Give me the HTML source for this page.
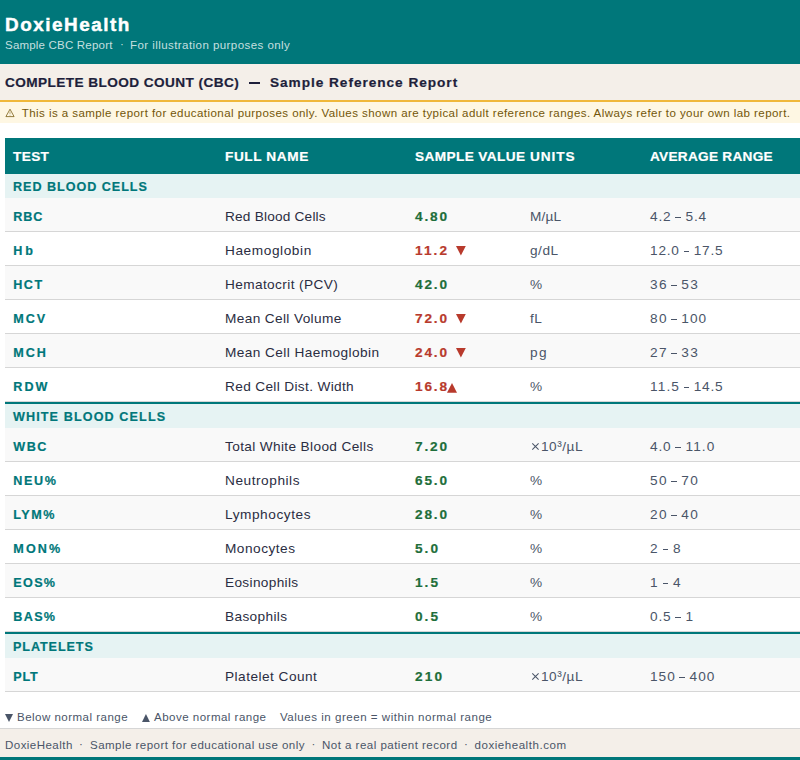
<!DOCTYPE html><html><head><meta charset="utf-8"><title>DoxieHealth CBC Report</title><style>

*{margin:0;padding:0;box-sizing:border-box}
html,body{width:800px;height:760px;overflow:hidden;background:#fff;font-family:"Liberation Sans", sans-serif}
.t{position:absolute;white-space:pre;line-height:20px;height:20px}
.blk{position:absolute}

</style></head><body>
<div class="blk" style="left:0;top:0;width:800px;height:64px;background:#00777a"></div>
<div class="blk" style="left:0;top:64px;width:800px;height:36px;background:#f4efe9"></div>
<div class="blk" style="left:0;top:100px;width:800px;height:2px;background:#f0b83a"></div>
<div class="blk" style="left:0;top:102px;width:800px;height:20.75px;background:#fef7e3"></div>
<div class="blk" style="left:5px;top:138px;width:795px;height:36px;background:#00777a"></div>
<div class="blk" style="left:5px;top:174px;width:795px;height:24px;background:#e6f3f3;"></div>
<div class="blk" style="left:5px;top:198px;width:795px;height:34px;background:#f9f9f9;border-bottom:1px solid #d6d6d6;"></div>
<div class="blk" style="left:5px;top:232px;width:795px;height:34px;background:#ffffff;border-bottom:1px solid #d6d6d6;"></div>
<div class="blk" style="left:5px;top:266px;width:795px;height:34px;background:#f9f9f9;border-bottom:1px solid #d6d6d6;"></div>
<div class="blk" style="left:5px;top:300px;width:795px;height:34px;background:#ffffff;border-bottom:1px solid #d6d6d6;"></div>
<div class="blk" style="left:5px;top:334px;width:795px;height:34px;background:#f9f9f9;border-bottom:1px solid #d6d6d6;"></div>
<div class="blk" style="left:5px;top:368px;width:795px;height:34px;background:#ffffff;border-bottom:1px solid #d6d6d6;"></div>
<div class="blk" style="left:5px;top:402px;width:795px;height:26px;background:#e6f3f3;border-top:2px solid #00777a;"></div>
<div class="blk" style="left:5px;top:428px;width:795px;height:34px;background:#f9f9f9;border-bottom:1px solid #d6d6d6;"></div>
<div class="blk" style="left:5px;top:462px;width:795px;height:34px;background:#ffffff;border-bottom:1px solid #d6d6d6;"></div>
<div class="blk" style="left:5px;top:496px;width:795px;height:34px;background:#f9f9f9;border-bottom:1px solid #d6d6d6;"></div>
<div class="blk" style="left:5px;top:530px;width:795px;height:34px;background:#ffffff;border-bottom:1px solid #d6d6d6;"></div>
<div class="blk" style="left:5px;top:564px;width:795px;height:34px;background:#f9f9f9;border-bottom:1px solid #d6d6d6;"></div>
<div class="blk" style="left:5px;top:598px;width:795px;height:34px;background:#ffffff;border-bottom:1px solid #d6d6d6;"></div>
<div class="blk" style="left:5px;top:632px;width:795px;height:26px;background:#e6f3f3;border-top:2px solid #00777a;"></div>
<div class="blk" style="left:5px;top:658px;width:795px;height:34px;background:#f9f9f9;border-bottom:1px solid #d6d6d6;"></div>
<div class="blk" style="left:0;top:728px;width:800px;height:32px;background:#f4efe9;border-top:1px solid #d6d6d6;border-bottom:3px solid #00777a"></div>
<svg class="blk" style="left:5px;top:108px" width="10" height="10" viewBox="0 0 10 10"><path d="M5 1.2 L9.1 8.6 H0.9 Z" fill="none" stroke="#735609" stroke-width="1" stroke-linejoin="round" opacity="0.75"/><path d="M5 3.6 V6.2 M5 7.1 V7.7" stroke="#735609" stroke-width="0.9" opacity="0.5"/></svg>
<svg class="blk" style="left:456.1px;top:246.4px" width="9.8" height="9.6" viewBox="0 0 9.8 9.6"><path d="M0 0 H9.8 L4.9 9.6 Z" fill="#b83a2c"/></svg>
<svg class="blk" style="left:456.1px;top:314.4px" width="9.8" height="9.6" viewBox="0 0 9.8 9.6"><path d="M0 0 H9.8 L4.9 9.6 Z" fill="#b83a2c"/></svg>
<svg class="blk" style="left:456.1px;top:348.4px" width="9.8" height="9.6" viewBox="0 0 9.8 9.6"><path d="M0 0 H9.8 L4.9 9.6 Z" fill="#b83a2c"/></svg>
<svg class="blk" style="left:447px;top:383.1px" width="10" height="9.7" viewBox="0 0 10 9.7"><path d="M5.0 0 L10 9.7 H0 Z" fill="#b83a2c"/></svg>
<svg class="blk" style="left:5.2px;top:713.9px" width="8" height="7.9" viewBox="0 0 8 7.9"><path d="M0 0 H8 L4.0 7.9 Z" fill="#4a5568"/></svg>
<svg class="blk" style="left:142.1px;top:714px" width="7.9" height="7.9" viewBox="0 0 7.9 7.9"><path d="M3.95 0 L7.9 7.9 H0 Z" fill="#4a5568"/></svg>
<div class="t" style="left:5px;top:15.00px;font-size:18.90px;font-weight:700;color:#ffffff;-webkit-text-stroke:0.45px #ffffff;letter-spacing:1.508px;">DoxieHealth</div>
<div class="t" style="left:5px;top:35.00px;font-size:11.55px;font-weight:400;color:rgba(255,255,255,0.78);letter-spacing:0.174px;">Sample CBC Report</div>
<div class="t" style="left:120px;top:34.00px;font-size:11.55px;font-weight:400;color:rgba(255,255,255,0.78);letter-spacing:0.000px;">·</div>
<div class="t" style="left:130px;top:35.00px;font-size:11.55px;font-weight:400;color:rgba(255,255,255,0.78);letter-spacing:0.422px;">For illustration purposes only</div>
<div class="t" style="left:5px;top:73.00px;font-size:13.65px;font-weight:700;color:#1e1f3b;-webkit-text-stroke:0.2px #1e1f3b;letter-spacing:0.410px;">COMPLETE BLOOD COUNT (CBC)</div>
<div class="blk" style="left:248.75px;top:82px;width:11.5px;height:2px;background:#1e1f3b"></div>
<div class="t" style="left:270px;top:73.00px;font-size:13.65px;font-weight:700;color:#1e1f3b;-webkit-text-stroke:0.2px #1e1f3b;letter-spacing:0.962px;">Sample Reference Report</div>
<div class="t" style="left:21.75px;top:103.00px;font-size:11.55px;font-weight:400;color:#735609;letter-spacing:0.423px;">This is a sample report for educational purposes only. Values shown are typical adult reference ranges. Always refer to your own lab report.</div>
<div class="t" style="left:13px;top:147.00px;font-size:13.65px;font-weight:700;color:#ffffff;-webkit-text-stroke:0.2px #ffffff;letter-spacing:0.363px;">TEST</div>
<div class="t" style="left:225px;top:147.00px;font-size:13.65px;font-weight:700;color:#ffffff;-webkit-text-stroke:0.2px #ffffff;letter-spacing:0.585px;">FULL NAME</div>
<div class="t" style="left:415px;top:147.00px;font-size:13.65px;font-weight:700;color:#ffffff;-webkit-text-stroke:0.2px #ffffff;letter-spacing:0.377px;">SAMPLE VALUE</div>
<div class="t" style="left:530px;top:147.00px;font-size:13.65px;font-weight:700;color:#ffffff;-webkit-text-stroke:0.2px #ffffff;letter-spacing:0.891px;">UNITS</div>
<div class="t" style="left:650px;top:147.00px;font-size:13.65px;font-weight:700;color:#ffffff;-webkit-text-stroke:0.2px #ffffff;letter-spacing:0.266px;">AVERAGE RANGE</div>
<div class="t" style="left:13px;top:177.00px;font-size:12.60px;font-weight:700;color:#00777a;-webkit-text-stroke:0.2px #00777a;letter-spacing:0.965px;">RED BLOOD CELLS</div>
<div class="t" style="left:13.3px;top:207.00px;font-size:12.60px;font-weight:700;color:#00777a;-webkit-text-stroke:0.2px #00777a;letter-spacing:0.853px;">RBC</div>
<div class="t" style="left:225px;top:207.00px;font-size:13.65px;font-weight:400;color:#2b2d42;letter-spacing:0.204px;">Red Blood Cells</div>
<div class="t" style="left:415px;top:207.00px;font-size:13.65px;font-weight:700;color:#1e6e3a;-webkit-text-stroke:0.2px #1e6e3a;letter-spacing:1.833px;">4.80</div>
<div class="t" style="left:530px;top:207.00px;font-size:13.65px;font-weight:400;color:#4a5568;letter-spacing:0.165px;">M/µL</div>
<div class="t" style="left:650px;top:207.00px;font-size:13.65px;font-weight:400;color:#4a5568;letter-spacing:0.853px;">4.2</div>
<div class="blk" style="left:675.30px;top:216.95px;width:5.6px;height:1.1px;background:#4a5568"></div>
<div class="t" style="left:685.4375px;top:207.00px;font-size:13.65px;font-weight:400;color:#4a5568;letter-spacing:0.853px;">5.4</div>
<div class="t" style="left:13.3px;top:241.00px;font-size:12.60px;font-weight:700;color:#00777a;-webkit-text-stroke:0.2px #00777a;letter-spacing:2.738px;">Hb</div>
<div class="t" style="left:225px;top:241.00px;font-size:13.65px;font-weight:400;color:#2b2d42;letter-spacing:0.584px;">Haemoglobin</div>
<div class="t" style="left:415px;top:241.00px;font-size:13.65px;font-weight:700;color:#b83a2c;-webkit-text-stroke:0.2px #b83a2c;letter-spacing:2.085px;">11.2</div>
<div class="t" style="left:530px;top:241.00px;font-size:13.65px;font-weight:400;color:#4a5568;letter-spacing:0.521px;">g/dL</div>
<div class="t" style="left:650px;top:241.00px;font-size:13.65px;font-weight:400;color:#4a5568;letter-spacing:0.792px;">12.0</div>
<div class="blk" style="left:683.56px;top:250.95px;width:5.6px;height:1.1px;background:#4a5568"></div>
<div class="t" style="left:693.703125px;top:241.00px;font-size:13.65px;font-weight:400;color:#4a5568;letter-spacing:0.792px;">17.5</div>
<div class="t" style="left:13.3px;top:275.00px;font-size:12.60px;font-weight:700;color:#00777a;-webkit-text-stroke:0.2px #00777a;letter-spacing:1.472px;">HCT</div>
<div class="t" style="left:225px;top:275.00px;font-size:13.65px;font-weight:400;color:#2b2d42;letter-spacing:0.387px;">Hematocrit (PCV)</div>
<div class="t" style="left:415px;top:275.00px;font-size:13.65px;font-weight:700;color:#1e6e3a;-webkit-text-stroke:0.2px #1e6e3a;letter-spacing:1.833px;">42.0</div>
<div class="t" style="left:530px;top:275.00px;font-size:13.65px;font-weight:400;color:#4a5568;letter-spacing:0.000px;">%</div>
<div class="t" style="left:650px;top:275.00px;font-size:13.65px;font-weight:400;color:#4a5568;letter-spacing:1.355px;">36</div>
<div class="blk" style="left:671.17px;top:284.95px;width:5.6px;height:1.1px;background:#4a5568"></div>
<div class="t" style="left:681.296875px;top:275.00px;font-size:13.65px;font-weight:400;color:#4a5568;letter-spacing:1.355px;">53</div>
<div class="t" style="left:13.3px;top:309.00px;font-size:12.60px;font-weight:700;color:#00777a;-webkit-text-stroke:0.2px #00777a;letter-spacing:1.922px;">MCV</div>
<div class="t" style="left:225px;top:309.00px;font-size:13.65px;font-weight:400;color:#2b2d42;letter-spacing:0.371px;">Mean Cell Volume</div>
<div class="t" style="left:415px;top:309.00px;font-size:13.65px;font-weight:700;color:#b83a2c;-webkit-text-stroke:0.2px #b83a2c;letter-spacing:1.833px;">72.0</div>
<div class="t" style="left:530px;top:309.00px;font-size:13.65px;font-weight:400;color:#4a5568;letter-spacing:0.442px;">fL</div>
<div class="t" style="left:650px;top:309.00px;font-size:13.65px;font-weight:400;color:#4a5568;letter-spacing:1.355px;">80</div>
<div class="blk" style="left:671.17px;top:318.95px;width:5.6px;height:1.1px;background:#4a5568"></div>
<div class="t" style="left:681.296875px;top:309.00px;font-size:13.65px;font-weight:400;color:#4a5568;letter-spacing:1.020px;">100</div>
<div class="t" style="left:13.3px;top:343.00px;font-size:12.60px;font-weight:700;color:#00777a;-webkit-text-stroke:0.2px #00777a;letter-spacing:1.953px;">MCH</div>
<div class="t" style="left:225px;top:343.00px;font-size:13.65px;font-weight:400;color:#2b2d42;letter-spacing:0.429px;">Mean Cell Haemoglobin</div>
<div class="t" style="left:415px;top:343.00px;font-size:13.65px;font-weight:700;color:#b83a2c;-webkit-text-stroke:0.2px #b83a2c;letter-spacing:1.833px;">24.0</div>
<div class="t" style="left:530px;top:343.00px;font-size:13.65px;font-weight:400;color:#4a5568;letter-spacing:1.323px;">pg</div>
<div class="t" style="left:650px;top:343.00px;font-size:13.65px;font-weight:400;color:#4a5568;letter-spacing:1.355px;">27</div>
<div class="blk" style="left:671.17px;top:352.95px;width:5.6px;height:1.1px;background:#4a5568"></div>
<div class="t" style="left:681.296875px;top:343.00px;font-size:13.65px;font-weight:400;color:#4a5568;letter-spacing:1.355px;">33</div>
<div class="t" style="left:13.3px;top:377.00px;font-size:12.60px;font-weight:700;color:#00777a;-webkit-text-stroke:0.2px #00777a;letter-spacing:2.068px;">RDW</div>
<div class="t" style="left:225px;top:377.00px;font-size:13.65px;font-weight:400;color:#2b2d42;letter-spacing:0.351px;">Red Cell Dist. Width</div>
<div class="t" style="left:415px;top:377.00px;font-size:13.65px;font-weight:700;color:#b83a2c;-webkit-text-stroke:0.2px #b83a2c;letter-spacing:1.833px;">16.8</div>
<div class="t" style="left:530px;top:377.00px;font-size:13.65px;font-weight:400;color:#4a5568;letter-spacing:0.000px;">%</div>
<div class="t" style="left:650px;top:377.00px;font-size:13.65px;font-weight:400;color:#4a5568;letter-spacing:1.131px;">11.5</div>
<div class="blk" style="left:683.56px;top:386.95px;width:5.6px;height:1.1px;background:#4a5568"></div>
<div class="t" style="left:693.703125px;top:377.00px;font-size:13.65px;font-weight:400;color:#4a5568;letter-spacing:0.792px;">14.5</div>
<div class="t" style="left:13px;top:407.00px;font-size:12.60px;font-weight:700;color:#00777a;-webkit-text-stroke:0.2px #00777a;letter-spacing:1.110px;">WHITE BLOOD CELLS</div>
<div class="t" style="left:13.3px;top:437.00px;font-size:12.60px;font-weight:700;color:#00777a;-webkit-text-stroke:0.2px #00777a;letter-spacing:1.443px;">WBC</div>
<div class="t" style="left:225px;top:437.00px;font-size:13.65px;font-weight:400;color:#2b2d42;letter-spacing:0.362px;">Total White Blood Cells</div>
<div class="t" style="left:415px;top:437.00px;font-size:13.65px;font-weight:700;color:#1e6e3a;-webkit-text-stroke:0.2px #1e6e3a;letter-spacing:1.833px;">7.20</div>
<svg class="blk" style="left:530px;top:442px" width="11" height="9" viewBox="0 0 11 9"><path d="M2.3 1.4 L8.6 7.6 M8.6 1.4 L2.3 7.6" stroke="#4a5568" stroke-width="1.05" stroke-linecap="butt"/></svg>
<div class="t" style="left:540.890625px;top:437.00px;font-size:13.65px;font-weight:400;color:#4a5568;letter-spacing:0.535px;">10³/µL</div>
<div class="t" style="left:650px;top:437.00px;font-size:13.65px;font-weight:400;color:#4a5568;letter-spacing:0.853px;">4.0</div>
<div class="blk" style="left:675.30px;top:446.95px;width:5.6px;height:1.1px;background:#4a5568"></div>
<div class="t" style="left:685.4375px;top:437.00px;font-size:13.65px;font-weight:400;color:#4a5568;letter-spacing:1.131px;">11.0</div>
<div class="t" style="left:13.3px;top:471.00px;font-size:12.60px;font-weight:700;color:#00777a;-webkit-text-stroke:0.2px #00777a;letter-spacing:1.631px;">NEU%</div>
<div class="t" style="left:225px;top:471.00px;font-size:13.65px;font-weight:400;color:#2b2d42;letter-spacing:0.551px;">Neutrophils</div>
<div class="t" style="left:415px;top:471.00px;font-size:13.65px;font-weight:700;color:#1e6e3a;-webkit-text-stroke:0.2px #1e6e3a;letter-spacing:1.833px;">65.0</div>
<div class="t" style="left:530px;top:471.00px;font-size:13.65px;font-weight:400;color:#4a5568;letter-spacing:0.000px;">%</div>
<div class="t" style="left:650px;top:471.00px;font-size:13.65px;font-weight:400;color:#4a5568;letter-spacing:1.355px;">50</div>
<div class="blk" style="left:671.17px;top:480.95px;width:5.6px;height:1.1px;background:#4a5568"></div>
<div class="t" style="left:681.296875px;top:471.00px;font-size:13.65px;font-weight:400;color:#4a5568;letter-spacing:1.355px;">70</div>
<div class="t" style="left:13.3px;top:505.00px;font-size:12.60px;font-weight:700;color:#00777a;-webkit-text-stroke:0.2px #00777a;letter-spacing:1.498px;">LYM%</div>
<div class="t" style="left:225px;top:505.00px;font-size:13.65px;font-weight:400;color:#2b2d42;letter-spacing:0.565px;">Lymphocytes</div>
<div class="t" style="left:415px;top:505.00px;font-size:13.65px;font-weight:700;color:#1e6e3a;-webkit-text-stroke:0.2px #1e6e3a;letter-spacing:1.833px;">28.0</div>
<div class="t" style="left:530px;top:505.00px;font-size:13.65px;font-weight:400;color:#4a5568;letter-spacing:0.000px;">%</div>
<div class="t" style="left:650px;top:505.00px;font-size:13.65px;font-weight:400;color:#4a5568;letter-spacing:1.355px;">20</div>
<div class="blk" style="left:671.17px;top:514.95px;width:5.6px;height:1.1px;background:#4a5568"></div>
<div class="t" style="left:681.296875px;top:505.00px;font-size:13.65px;font-weight:400;color:#4a5568;letter-spacing:1.355px;">40</div>
<div class="t" style="left:13.3px;top:539.00px;font-size:12.60px;font-weight:700;color:#00777a;-webkit-text-stroke:0.2px #00777a;letter-spacing:2.102px;">MON%</div>
<div class="t" style="left:225px;top:539.00px;font-size:13.65px;font-weight:400;color:#2b2d42;letter-spacing:0.507px;">Monocytes</div>
<div class="t" style="left:415px;top:539.00px;font-size:13.65px;font-weight:700;color:#1e6e3a;-webkit-text-stroke:0.2px #1e6e3a;letter-spacing:2.025px;">5.0</div>
<div class="t" style="left:530px;top:539.00px;font-size:13.65px;font-weight:400;color:#4a5568;letter-spacing:0.000px;">%</div>
<div class="t" style="left:650px;top:539.00px;font-size:13.65px;font-weight:400;color:#4a5568;letter-spacing:0.000px;">2</div>
<div class="blk" style="left:662.89px;top:548.95px;width:5.6px;height:1.1px;background:#4a5568"></div>
<div class="t" style="left:673.03125px;top:539.00px;font-size:13.65px;font-weight:400;color:#4a5568;letter-spacing:0.000px;">8</div>
<div class="t" style="left:13.3px;top:573.00px;font-size:12.60px;font-weight:700;color:#00777a;-webkit-text-stroke:0.2px #00777a;letter-spacing:1.318px;">EOS%</div>
<div class="t" style="left:225px;top:573.00px;font-size:13.65px;font-weight:400;color:#2b2d42;letter-spacing:0.341px;">Eosinophils</div>
<div class="t" style="left:415px;top:573.00px;font-size:13.65px;font-weight:700;color:#1e6e3a;-webkit-text-stroke:0.2px #1e6e3a;letter-spacing:2.025px;">1.5</div>
<div class="t" style="left:530px;top:573.00px;font-size:13.65px;font-weight:400;color:#4a5568;letter-spacing:0.000px;">%</div>
<div class="t" style="left:650px;top:573.00px;font-size:13.65px;font-weight:400;color:#4a5568;letter-spacing:0.000px;">1</div>
<div class="blk" style="left:662.89px;top:582.95px;width:5.6px;height:1.1px;background:#4a5568"></div>
<div class="t" style="left:673.03125px;top:573.00px;font-size:13.65px;font-weight:400;color:#4a5568;letter-spacing:0.000px;">4</div>
<div class="t" style="left:13.3px;top:607.00px;font-size:12.60px;font-weight:700;color:#00777a;-webkit-text-stroke:0.2px #00777a;letter-spacing:1.329px;">BAS%</div>
<div class="t" style="left:225px;top:607.00px;font-size:13.65px;font-weight:400;color:#2b2d42;letter-spacing:0.364px;">Basophils</div>
<div class="t" style="left:415px;top:607.00px;font-size:13.65px;font-weight:700;color:#1e6e3a;-webkit-text-stroke:0.2px #1e6e3a;letter-spacing:2.025px;">0.5</div>
<div class="t" style="left:530px;top:607.00px;font-size:13.65px;font-weight:400;color:#4a5568;letter-spacing:0.000px;">%</div>
<div class="t" style="left:650px;top:607.00px;font-size:13.65px;font-weight:400;color:#4a5568;letter-spacing:0.853px;">0.5</div>
<div class="blk" style="left:675.30px;top:616.95px;width:5.6px;height:1.1px;background:#4a5568"></div>
<div class="t" style="left:685.4375px;top:607.00px;font-size:13.65px;font-weight:400;color:#4a5568;letter-spacing:0.000px;">1</div>
<div class="t" style="left:13px;top:637.00px;font-size:12.60px;font-weight:700;color:#00777a;-webkit-text-stroke:0.2px #00777a;letter-spacing:0.910px;">PLATELETS</div>
<div class="t" style="left:13.3px;top:667.00px;font-size:12.60px;font-weight:700;color:#00777a;-webkit-text-stroke:0.2px #00777a;letter-spacing:0.787px;">PLT</div>
<div class="t" style="left:225px;top:667.00px;font-size:13.65px;font-weight:400;color:#2b2d42;letter-spacing:0.478px;">Platelet Count</div>
<div class="t" style="left:415px;top:667.00px;font-size:13.65px;font-weight:700;color:#1e6e3a;-webkit-text-stroke:0.2px #1e6e3a;letter-spacing:2.176px;">210</div>
<svg class="blk" style="left:530px;top:672px" width="11" height="9" viewBox="0 0 11 9"><path d="M2.3 1.4 L8.6 7.6 M8.6 1.4 L2.3 7.6" stroke="#4a5568" stroke-width="1.05" stroke-linecap="butt"/></svg>
<div class="t" style="left:540.890625px;top:667.00px;font-size:13.65px;font-weight:400;color:#4a5568;letter-spacing:0.535px;">10³/µL</div>
<div class="t" style="left:650px;top:667.00px;font-size:13.65px;font-weight:400;color:#4a5568;letter-spacing:1.020px;">150</div>
<div class="blk" style="left:679.44px;top:676.95px;width:5.6px;height:1.1px;background:#4a5568"></div>
<div class="t" style="left:689.5625px;top:667.00px;font-size:13.65px;font-weight:400;color:#4a5568;letter-spacing:1.020px;">400</div>
<div class="t" style="left:17px;top:707.00px;font-size:11.55px;font-weight:400;color:#4a5568;letter-spacing:0.464px;">Below normal range</div>
<div class="t" style="left:154px;top:707.00px;font-size:11.55px;font-weight:400;color:#4a5568;letter-spacing:0.472px;">Above normal range</div>
<div class="t" style="left:280px;top:707.00px;font-size:11.55px;font-weight:400;color:#4a5568;letter-spacing:0.513px;">Values in green = within normal range</div>
<div class="t" style="left:5px;top:735.00px;font-size:11.55px;font-weight:400;color:#4a5568;letter-spacing:0.441px;">DoxieHealth</div>
<div class="t" style="left:79px;top:734.00px;font-size:11.55px;font-weight:400;color:#4a5568;letter-spacing:0.000px;">·</div>
<div class="t" style="left:90px;top:735.00px;font-size:11.55px;font-weight:400;color:#4a5568;letter-spacing:0.455px;">Sample report for educational use only</div>
<div class="t" style="left:311.5px;top:734.00px;font-size:11.55px;font-weight:400;color:#4a5568;letter-spacing:0.000px;">·</div>
<div class="t" style="left:322px;top:735.00px;font-size:11.55px;font-weight:400;color:#4a5568;letter-spacing:0.468px;">Not a real patient record</div>
<div class="t" style="left:464px;top:734.00px;font-size:11.55px;font-weight:400;color:#4a5568;letter-spacing:0.000px;">·</div>
<div class="t" style="left:474.5px;top:735.00px;font-size:11.55px;font-weight:400;color:#4a5568;letter-spacing:0.530px;">doxiehealth.com</div>
</body></html>
